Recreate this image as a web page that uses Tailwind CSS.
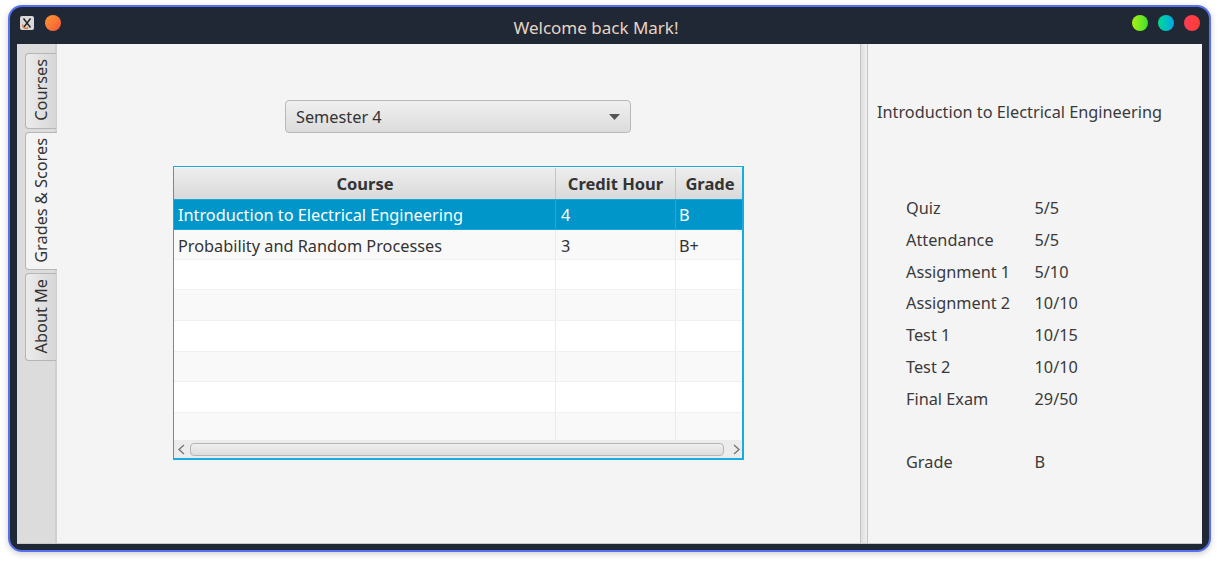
<!DOCTYPE html>
<html lang="en">
<head>
  <meta charset="UTF-8" />
  <title>Welcome back Mark!</title>
  <script src="https://cdn.jsdelivr.net/npm/@tailwindcss/browser@4"></script>
</head>
<body class="bg-white w-[1219px] h-[561px] overflow-hidden font-['Noto_Sans',sans-serif] text-[16.3px] text-[#333]">
  <div class="pt-[5px] pl-[8px]">
    <!-- Window -->
    <div class="w-[1203px] h-[547px] rounded-[14px] border-2 border-[#5670ee] bg-[#202835] shadow-[0_2px_6px_rgba(0,0,0,0.2)] flex flex-col overflow-hidden">
      <!-- Title bar -->
      <div class="h-[37px] shrink-0 flex items-start pt-[8px] pl-[10px] pr-[9px]">
        <div class="w-[14px] h-[14px] mt-[1px] bg-[#d8d8d8] rounded-[2px] flex items-center justify-center">
          <svg width="12" height="12" viewBox="0 0 12 12" fill="none"><path d="M2.5 1.5L9.5 10.5M9.5 1.5L3 10" stroke="#222" stroke-width="1.4"/><path d="M2 7.5a3 3 0 0 0 5 3" stroke="#e8692c" stroke-width="1.3"/></svg>
        </div>
        <div class="w-[16px] h-[16px] ml-[11px] rounded-full bg-gradient-to-br from-[#fb9a2c] to-[#f4513c]"></div>
        <div class="flex-1 text-center text-[#e6d5c3] text-[17px] leading-none pt-[4px] pr-[1px]">Welcome back Mark!</div>
        <div class="w-[16px] h-[16px] rounded-full bg-gradient-to-r from-[#a6f00f] to-[#2fe02c]"></div>
        <div class="w-[16px] h-[16px] ml-[10px] rounded-full bg-gradient-to-r from-[#0fd98a] to-[#0aa5e8]"></div>
        <div class="w-[16px] h-[16px] ml-[10px] rounded-full bg-gradient-to-r from-[#ff3b52] to-[#ff3d33]"></div>
      </div>

      <!-- Content -->
      <div class="mx-[7px] h-[500px] flex bg-[#f4f4f4] border-b border-[#c8c8c8]">
        <!-- Side tabs -->
        <div class="w-[40px] shrink-0 bg-[#dcdcdc] border-r-2 border-[#cfcfcf] pl-[8px] pt-[9px] flex flex-col gap-[3px]">
          <div class="h-[76px] w-[31px] rounded-l-[4px] border border-r-0 border-[#b5b5b5] bg-gradient-to-r from-[#ececec] to-[#d6d6d6] flex items-center justify-center pb-[2px]">
            <span class="[writing-mode:vertical-rl] rotate-180 leading-none">Courses</span>
          </div>
          <div class="h-[138px] w-[32px] rounded-l-[4px] border border-r-0 border-[#b5b5b5] bg-[#f4f4f4] flex items-center justify-center pr-[1px] pb-[2px]">
            <span class="[writing-mode:vertical-rl] rotate-180 leading-none whitespace-nowrap">Grades &amp; Scores</span>
          </div>
          <div class="h-[88px] w-[31px] rounded-l-[4px] border border-r-0 border-[#b5b5b5] bg-gradient-to-r from-[#ececec] to-[#d6d6d6] flex items-center justify-center pb-[1px]">
            <span class="[writing-mode:vertical-rl] rotate-180 leading-none whitespace-nowrap">About Me</span>
          </div>
        </div>

        <!-- Center pane -->
        <div class="w-[803px] shrink-0 pl-[116px] pt-[56px]">
          <div class="ml-[112px] w-[346px] h-[33px] rounded-[4px] border border-[#b8b8b8] bg-gradient-to-b from-[#f0f0f0] to-[#dcdcdc] flex items-center justify-between pl-[10px] pr-[10px]">
            <span class="pt-[1px]">Semester 4</span>
            <svg width="11" height="6" viewBox="0 0 11 6"><path d="M0 0H11L5.5 6Z" fill="#555"/></svg>
          </div>

          <!-- Table -->
          <div class="mt-[33px] w-[571px] h-[294px] border border-r-2 border-b-2 border-[#15ade0] pt-[1px] bg-white flex flex-col">
            <div class="h-[31px] shrink-0 flex bg-gradient-to-b from-[#eeeeee] to-[#d9d9d9] font-bold text-[16.5px] text-center leading-[32px]">
              <div class="w-[382px] border-r border-[#c4c4c4] pl-[1px]">Course</div>
              <div class="w-[120px] border-r border-[#c4c4c4]">Credit Hour</div>
              <div class="flex-1 pl-[2px]">Grade</div>
            </div>
            <div class="h-[31px] shrink-0 flex bg-[#0096c9] text-white leading-[30px] border-y border-[#1aa6d6]">
              <div class="w-[382px] border-r border-[#25a6d3] pl-[4px] whitespace-nowrap">Introduction to Electrical Engineering</div>
              <div class="w-[120px] border-r border-[#25a6d3] pl-[5px]">4</div>
              <div class="flex-1 pl-[3px]">B</div>
            </div>
            <div class="h-[30px] shrink-0 flex bg-[#f9f9f9] border-b border-[#f0f0f0] leading-[32px]">
              <div class="w-[382px] border-r border-[#ebebeb] pl-[4px] whitespace-nowrap">Probability and Random Processes</div>
              <div class="w-[120px] border-r border-[#ebebeb] pl-[5px]">3</div>
              <div class="flex-1 pl-[3px]">B+</div>
            </div>
            <div class="h-[30px] shrink-0 flex bg-white border-b border-[#f0f0f0]"><div class="w-[382px] border-r border-[#ebebeb]"></div><div class="w-[120px] border-r border-[#ebebeb]"></div></div>
            <div class="h-[31px] shrink-0 flex bg-[#f9f9f9] border-b border-[#f0f0f0]"><div class="w-[382px] border-r border-[#ebebeb]"></div><div class="w-[120px] border-r border-[#ebebeb]"></div></div>
            <div class="h-[31px] shrink-0 flex bg-white border-b border-[#f0f0f0]"><div class="w-[382px] border-r border-[#ebebeb]"></div><div class="w-[120px] border-r border-[#ebebeb]"></div></div>
            <div class="h-[30px] shrink-0 flex bg-[#f9f9f9] border-b border-[#f0f0f0]"><div class="w-[382px] border-r border-[#ebebeb]"></div><div class="w-[120px] border-r border-[#ebebeb]"></div></div>
            <div class="h-[31px] shrink-0 flex bg-white border-b border-[#f0f0f0]"><div class="w-[382px] border-r border-[#ebebeb]"></div><div class="w-[120px] border-r border-[#ebebeb]"></div></div>
            <div class="flex-1 min-h-0 flex bg-[#f9f9f9]"><div class="w-[382px] border-r border-[#ebebeb]"></div><div class="w-[120px] border-r border-[#ebebeb]"></div></div>
            <!-- Scrollbar -->
            <div class="h-[18px] shrink-0 bg-[#ececec] flex items-center">
              <svg class="mx-[3px]" width="9" height="11" viewBox="0 0 9 11" fill="none"><path d="M7 1L2 5.5L7 10" stroke="#777" stroke-width="1.4"/></svg>
              <div class="w-[534px] h-[13px] ml-[1px] rounded-[4px] border border-[#b5b5b5] bg-gradient-to-b from-[#f0f0f0] to-[#dcdcdc]"></div>
              <svg class="ml-[8px]" width="9" height="11" viewBox="0 0 9 11" fill="none"><path d="M2 1L7 5.5L2 10" stroke="#777" stroke-width="1.4"/></svg>
            </div>
          </div>
        </div>

        <!-- Split divider -->
        <div class="w-[8px] shrink-0 border-x border-[#c4c4c4] bg-gradient-to-r from-[#dedede] to-[#f0f0f0]"></div>

        <!-- Right pane -->
        <div class="flex-1 pl-[9px] text-[#3a3a3a]">
          <div class="mt-[57px] leading-[22px] whitespace-nowrap">Introduction to Electrical Engineering</div>
          <div class="mt-[69.4px] ml-[29px] grid grid-cols-[128.5px_1fr] auto-rows-[31.8px] items-center">
            <span>Quiz</span><span>5/5</span>
            <span>Attendance</span><span>5/5</span>
            <span>Assignment 1</span><span>5/10</span>
            <span>Assignment 2</span><span>10/10</span>
            <span>Test 1</span><span>10/15</span>
            <span>Test 2</span><span>10/10</span>
            <span>Final Exam</span><span>29/50</span>
            <span></span><span></span>
            <span class="-mt-[1px]">Grade</span><span class="-mt-[1px]">B</span>
          </div>
        </div>
      </div>
    </div>
  </div>
</body>
</html>
